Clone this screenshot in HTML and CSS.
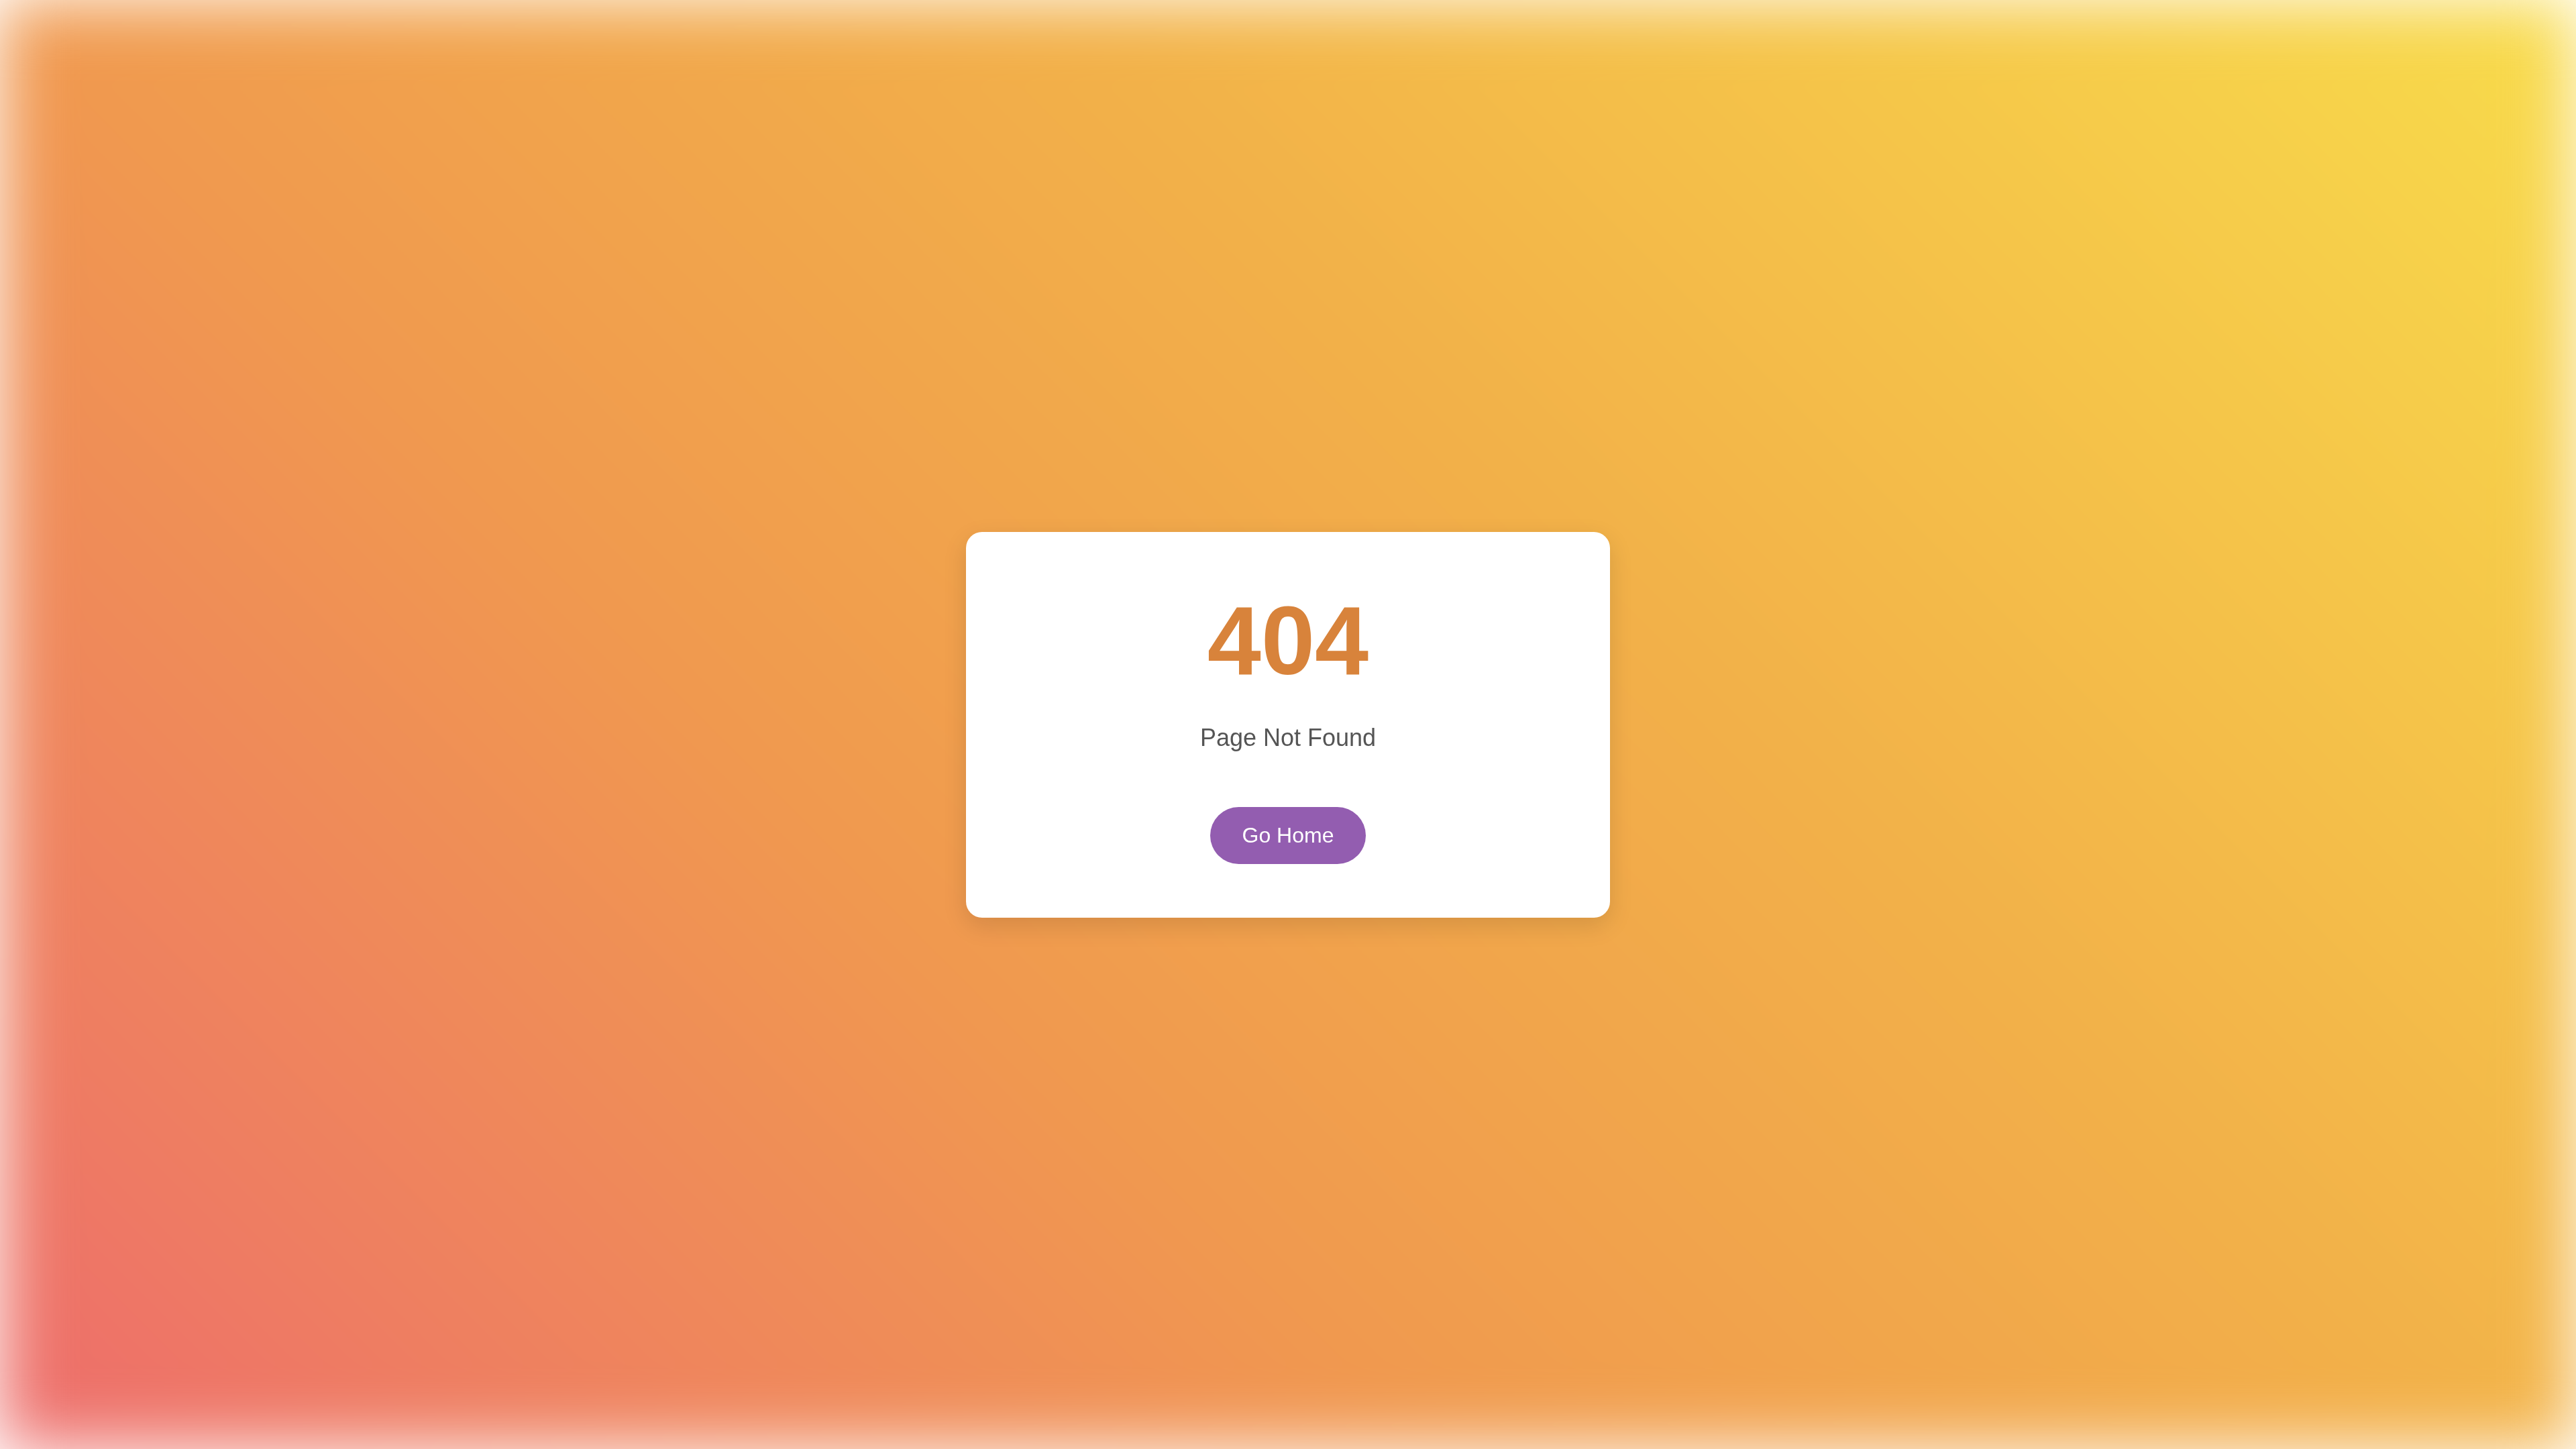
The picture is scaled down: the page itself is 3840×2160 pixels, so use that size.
FILE: index.html
```html
<!DOCTYPE html>
<html lang="en">
<head>
<meta charset="utf-8">
<title>404 - Page Not Found</title>
<link rel="stylesheet" href="styles.css">
</head>
<body>
<div class="backdrop" aria-hidden="true"></div>
<main class="page">
  <section class="card">
    <h1 class="code">404</h1>
    <p class="message">Page Not Found</p>
    <a class="home-btn" href="#">Go Home</a>
  </section>
</main>
</body>
</html>
```

FILE: styles.css
```css
html, body {
  margin: 0;
  padding: 0;
  height: 100%;
}

body {
  background: #ffffff;
  font-family: "Liberation Sans", Arial, Helvetica, sans-serif;
  overflow: hidden;
}

.backdrop {
  position: fixed;
  inset: 0;
  z-index: 0;
  background: linear-gradient(45deg, #ed6c6c 0%, #ee7d62 12%, #f0994f 36%, #f1a64b 50%, #f2b149 62%, #f5c549 80%, #f8dc4b 100%);
  filter: blur(50px);
}

.page {
  position: relative;
  z-index: 1;
  min-height: 100vh;
  display: flex;
  align-items: center;
  justify-content: center;
}

.card {
  width: 960px;
  box-sizing: border-box;
  padding: 80px 40px 80px;
  background: #ffffff;
  border-radius: 24px;
  box-shadow: 0 12px 36px rgba(0, 0, 0, 0.12);
  display: flex;
  flex-direction: column;
  align-items: center;
  text-align: center;
  margin-top: 0;
}

.code {
  margin: 0 0 40px;
  font-size: 144px;
  font-weight: 700;
  line-height: normal;
  color: #d8833b;
}

.message {
  margin: 0 0 82px;
  font-size: 36px;
  line-height: normal;
  color: #555555;
}

.home-btn {
  display: inline-block;
  padding: 24px 48px;
  border-radius: 999px;
  background: #935db0;
  color: #ffffff;
  font-size: 32px;
  line-height: normal;
  text-decoration: none;
}
```
